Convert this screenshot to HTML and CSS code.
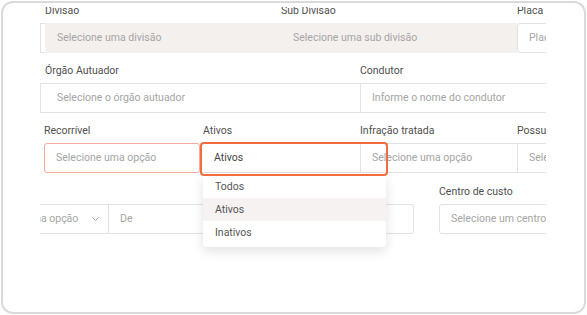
FILE: index.html
```html
<!DOCTYPE html>
<html lang="pt-BR">
<head>
    <meta charset="UTF-8">
    <meta name="viewport" content="width=device-width, initial-scale=1.0">
    <title>Filtros de infrações</title>
    <link rel="stylesheet" href="styles.css">
</head>
<body>
    <div class="frame">
        <div class="viewport">
            <div class="rows">
                <!-- linha 1 -->
                <div class="row">
                    <div class="bracket"></div>
                    <div class="field w-236">
                        <label class="label">Divisão</label>
                        <div class="input disabled">Selecione uma divisão</div>
                    </div>
                    <div class="field w-236">
                        <label class="label">Sub Divisão</label>
                        <div class="input disabled">Selecione uma sub divisão</div>
                    </div>
                    <div class="field w-100">
                        <label class="label">Placa</label>
                        <div class="input rounded-left">Placa do veículo</div>
                    </div>
                </div>

                <!-- linha 2 -->
                <div class="row">
                    <div class="field w-320">
                        <label class="label pad-5">Órgão Autuador</label>
                        <div class="input no-right pad-16">Selecione o órgão autuador</div>
                    </div>
                    <div class="field w-200">
                        <label class="label">Condutor</label>
                        <div class="input">Informe o nome do condutor</div>
                    </div>
                </div>

                <!-- linha 3 -->
                <div class="row">
                    <div class="field w-156 ml-4">
                        <label class="label">Recorrível</label>
                        <div class="input invalid">Selecione uma opção</div>
                    </div>
                    <div class="field w-160">
                        <label class="label pad-3">Ativos</label>
                        <div class="select-wrap">
                            <div class="input no-right value pad-13">Ativos</div>
                            <div class="focus-ring"></div>
                            <div class="menu">
                                <div class="menu-item">Todos</div>
                                <div class="menu-item active">Ativos</div>
                                <div class="menu-item">Inativos</div>
                            </div>
                        </div>
                    </div>
                    <div class="field w-157">
                        <label class="label">Infração tratada</label>
                        <div class="input no-right">Selecione uma opção</div>
                    </div>
                    <div class="field w-100">
                        <label class="label">Possui recurso</label>
                        <div class="input">Selecione uma opção</div>
                    </div>
                </div>

                <!-- linha 4 -->
                <div class="row row-last">
                    <div class="field w-141 ml-neg">
                        <label class="label">&nbsp;</label>
                        <div class="input select">
                            <span>Selecione uma opção</span>
                            <svg width="7" height="4" viewBox="0 0 7 4"><path d="M0.5 0.5 L3.5 3.5 L6.5 0.5" fill="none" stroke="#a0a0a0" stroke-width="1"/></svg>
                        </div>
                    </div>
                    <div class="field w-305">
                        <label class="label">&nbsp;</label>
                        <div class="input no-left rounded-right">De</div>
                    </div>
                    <div class="field w-120 ml-25">
                        <label class="label">Centro de custo</label>
                        <div class="input rounded">Selecione um centro de custo</div>
                    </div>
                </div>
            </div>
        </div>
    </div>
</body>
</html>
```

FILE: styles.css
```css
* {
    box-sizing: border-box;
}
body {
    margin: 0;
    background-color: #fff;
    font-family: Roboto, "Liberation Sans", sans-serif;
    font-size: 10.5px;
}
.frame {
    margin: 1px;
    width: 585px;
    height: 313px;
    border: 2px solid #dadada;
    border-radius: 12px;
    overflow: hidden;
    padding: 4px 0 0 37px;
}
.viewport {
    width: 506px;
    height: 100%;
    overflow: hidden;
}
.rows {
    margin-top: -3px;
    display: flex;
    flex-direction: column;
    gap: 11px;
}
.row {
    display: flex;
    align-items: flex-start;
}
.row-last {
    margin-top: 1px;
}
.field {
    flex: none;
}
.label {
    display: block;
    height: 14px;
    line-height: 14px;
    margin-bottom: 5px;
    color: #4f4f4f;
    white-space: nowrap;
}
.input {
    height: 30px;
    line-height: 28px;
    border: 1px solid #e2e2e2;
    padding: 0 11px;
    color: #a5a5a5;
    background-color: #fff;
    white-space: nowrap;
    overflow: hidden;
}
.input.disabled {
    background-color: #f4f0ee;
    border-color: #f4f0ee;
}
.input.invalid {
    border-color: #f4aa9a;
    border-radius: 3px;
    padding-left: 11px;
}
.input.value {
    color: #444;
}
.input.select {
    display: flex;
    align-items: center;
    justify-content: space-between;
    padding-left: 9px;
    padding-right: 9px;
}
.bracket {
    flex: none;
    width: 5px;
    height: 30px;
    margin-top: 19px;
    border: 1px solid #e2e2e2;
    border-right: none;
}
.no-right { border-right: none; }
.no-left { border-left: none; }
.rounded { border-radius: 3px; }
.rounded-left { border-radius: 3px 0 0 3px; }
.rounded-right { border-radius: 0 3px 3px 0; }
.pad-3 { padding-left: 3px; }
.pad-5 { padding-left: 5px; }
.pad-13 { padding-left: 13px; }
.pad-16 { padding-left: 16px; }
.ml-4 { margin-left: 4px; }
.ml-25 { margin-left: 25px; }
.ml-neg { margin-left: -72px; }
.w-100 { width: 100px; }
.w-120 { width: 120px; }
.w-141 { width: 141px; }
.w-156 { width: 156px; }
.w-157 { width: 157px; }
.w-160 { width: 160px; }
.w-200 { width: 200px; }
.w-236 { width: 236px; }
.w-305 { width: 305px; }
.w-320 { width: 320px; }

/* select aberto */
.select-wrap {
    position: relative;
}
.focus-ring {
    position: absolute;
    left: 0;
    top: -1px;
    width: 188px;
    height: 34px;
    border: 2px solid #f26d3d;
    border-radius: 4px;
    z-index: 3;
}
.menu {
    position: absolute;
    left: 3px;
    top: 32px;
    width: 183px;
    padding-bottom: 3px;
    background-color: #fff;
    border-radius: 0 0 4px 4px;
    box-shadow: 0 4px 12px rgba(0, 0, 0, 0.12);
    z-index: 2;
}
.menu-item {
    height: 23px;
    line-height: 23px;
    padding-left: 12px;
    color: #555;
}
.menu-item.active {
    background-color: #f5f2f1;
}
```
